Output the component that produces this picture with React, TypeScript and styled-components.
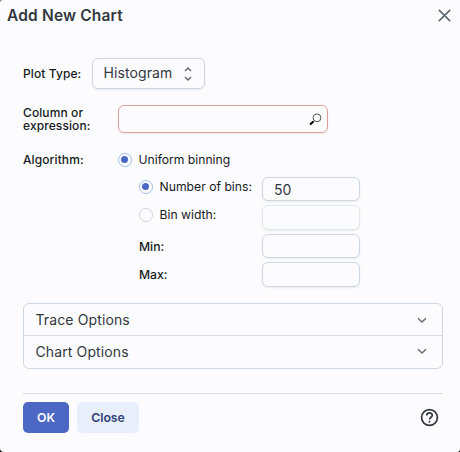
import React from "react";
import styled, { createGlobalStyle } from "styled-components";

const GlobalStyle = createGlobalStyle`
  * { box-sizing: border-box; }
  body { margin: 0; background: linear-gradient(0deg, #111, #777); }
  button, input { font-family: inherit; margin: 0; }
`;

const Dialog = styled.div`
  width: 460px;
  height: 452px;
  background: #fcfcfe;
  border-radius: 3px 0 3px 4px;
  overflow: hidden;
  font-family: Inter, "Liberation Sans", sans-serif;
  font-size: 12.5px;
  color: #171a1c;
`;

const Header = styled.header`
  display: flex;
  justify-content: space-between;
  align-items: center;
  height: 30px;
  padding: 0 9px 0 7px;
`;

const Title = styled.h1`
  margin: 2px 0 0;
  font-size: 15.5px;
  line-height: 20px;
  font-weight: 600;
  letter-spacing: 0.17px;
  color: #32383e;
`;

const IconButton = styled.button`
  display: flex;
  padding: 0;
  border: 0;
  background: none;
`;

const Body = styled.main`
  padding: 28px 17px 0 23px;
`;

const Row = styled.div<{ $h: number; $gap?: number }>`
  display: flex;
  align-items: center;
  height: ${(p) => p.$h}px;
  margin-bottom: ${(p) => p.$gap ?? 0}px;
`;

const Label = styled.label<{ $w: number }>`
  width: ${(p) => p.$w}px;
  flex: none;
  font-size: 12px;
  line-height: 13px;
  font-weight: 500;
  letter-spacing: 0.1px;
`;

const Select = styled.button`
  display: flex;
  align-items: center;
  justify-content: space-between;
  width: 113px;
  height: 31px;
  padding: 0 10px 2px 10.5px;
  border: 1px solid #cdd7e1;
  border-radius: 6px;
  background: #fcfcfe;
  box-shadow: 0 1px 2px rgba(21, 21, 21, 0.08);
  font-size: 14px;
  letter-spacing: 0.1px;
  color: #32383e;

  svg { margin-top: 2px; }
`;

const SearchField = styled.div`
  display: flex;
  align-items: center;
  width: 210px;
  height: 28px;
  padding: 0 5px 0 11px;
  border: 1px solid #dc9f97;
  border-radius: 6px;
  box-shadow: 0 1px 2px rgba(21, 21, 21, 0.08);
`;

const SearchInput = styled.input`
  flex: 1;
  min-width: 0;
  border: 0;
  padding: 0;
  background: none;
  font-size: 14px;
`;

const Binning = styled.div`
  display: grid;
  grid-template-columns: 123px 98px;
  grid-template-rows: 24px 25px 24px 25px;
  row-gap: 4px;
  margin: 7px 0 16px 116px;
`;

const BinLabel = styled.label<{ $bold?: boolean }>`
  display: flex;
  align-items: center;
  gap: 6.5px;
  height: 20px;
  font-size: 12.2px;
  font-weight: ${(p) => (p.$bold ? 500 : 400)};
  padding-top: ${(p) => (p.$bold ? 5 : 0)}px;
`;

const OptionText = styled.span`
  margin-top: -2px;
`;

const Radio = styled.span<{ $checked?: boolean }>`
  display: grid;
  place-items: center;
  flex: none;
  width: 14px;
  height: 14px;
  border: 1px solid ${(p) => (p.$checked ? "#a5bfea" : "#cdd7e1")};
  border-radius: 50%;

  &::after {
    content: "";
    width: 7px;
    height: 7px;
    margin: 0 1px 1px 0;
    border-radius: 50%;
    background: ${(p) => (p.$checked ? "#4a67c5" : "transparent")};
  }
`;

const RadioLabel = styled.label`
  display: flex;
  align-items: center;
  gap: 6.5px;
  font-size: 12.15px;
`;

const Field = styled.input`
  width: 98px;
  height: 100%;
  padding: 0 11px;
  border: 1px solid #cdd7e1;
  border-radius: 6px;
  background: #fcfcfe;
  box-shadow: 0 1px 2px rgba(21, 21, 21, 0.08);
  font-size: 14px;
  color: #32383e;

  &:disabled { border-color: #e2e7ed; }
`;

const Accordion = styled.div`
  height: 66px;
  border: 1px solid #cdd7e1;
  border-radius: 6px;
`;

const AccordionItem = styled.button`
  display: flex;
  align-items: center;
  justify-content: space-between;
  width: 100%;
  height: 31px;
  padding: 0 13px 0 11.5px;
  border: 0;
  background: none;
  font-size: 14px;
  letter-spacing: 0.12px;
  color: #32383e;

  & + & {
    height: 33px;
    padding-bottom: 2px;
    border-top: 1px solid #d7dce3;
  }
`;

const Footer = styled.footer`
  display: flex;
  gap: 8px;
  align-items: flex-start;
  margin-top: 24px;
  padding: 8px 4px 0 0;
  border-top: 1px solid #dadde2;
`;

const Action = styled.button<{ $primary?: boolean }>`
  width: ${(p) => (p.$primary ? 46 : 62)}px;
  height: 31px;
  padding: 0;
  border: 0;
  border-radius: 5px;
  background: ${(p) => (p.$primary ? "#4d67c4" : "#e8effb")};
  color: ${(p) => (p.$primary ? "#fbfcfe" : "#2f4078")};
  font-size: 12.25px;
  font-weight: 600;
`;

const HelpButton = styled(IconButton)`
  margin: 6px 0 0 auto;
`;

const Chevron = () => (
  <svg width="14" height="14" viewBox="0 0 14 14" fill="none" stroke="#636b74" strokeWidth="1.4">
    <path d="M3 5.2 7 9l4-3.8" />
  </svg>
);

export default function App() {
  return (
    <>
      <GlobalStyle />
      <Dialog role="dialog" aria-label="Add New Chart">
        <Header>
          <Title>Add New Chart</Title>
          <IconButton aria-label="Dismiss">
            <svg width="13" height="13" viewBox="0 0 13 13" stroke="#636b74" strokeWidth="1.7">
              <path d="m.8.8 11.4 11.4M12.2.8.8 12.2" />
            </svg>
          </IconButton>
        </Header>
        <Body>
          <Row $h={31} $gap={16}>
            <Label $w={69}>Plot Type:</Label>
            <Select>
              Histogram
              <svg width="12" height="16" viewBox="0 0 12 16" fill="none" stroke="#636b74" strokeWidth="1.5">
                <path d="m3 5 3-3 3 3M3 11l3 3 3-3" />
              </svg>
            </Select>
          </Row>
          <Row $h={28} $gap={16}>
            <Label $w={95}>Column or expression:</Label>
            <SearchField>
              <SearchInput aria-label="Column or expression" />
              <svg width="13" height="13" viewBox="0 0 13 13" fill="none">
                <circle cx="8" cy="4.8" r="3.9" stroke="#555" />
                <path d="m5.2 7.8-1.4 1.3" stroke="#444" />
                <path d="m4.4 8.4-3.3 3.1" stroke="#000" strokeWidth="2" />
              </svg>
            </SearchField>
          </Row>
          <Row $h={21}>
            <Label $w={95}>Algorithm:</Label>
            <RadioLabel><Radio $checked />Uniform binning</RadioLabel>
          </Row>
          <Binning>
            <BinLabel><Radio $checked /><OptionText>Number of bins:</OptionText></BinLabel>
            <Field defaultValue="50" />
            <BinLabel><Radio /><OptionText>Bin width:</OptionText></BinLabel>
            <Field disabled />
            <BinLabel $bold>Min:</BinLabel>
            <Field />
            <BinLabel $bold>Max:</BinLabel>
            <Field />
          </Binning>
          <Accordion>
            <AccordionItem>Trace Options<Chevron /></AccordionItem>
            <AccordionItem>Chart Options<Chevron /></AccordionItem>
          </Accordion>
          <Footer>
            <Action $primary>OK</Action>
            <Action>Close</Action>
            <HelpButton aria-label="Help">
              <svg width="19" height="19" viewBox="0 0 19 19" fill="none" stroke="#32383e" strokeWidth="1.7">
                <circle cx="9.5" cy="9.5" r="7.9" />
                <path d="M6.7 7.6c0-3.6 5.6-3.5 5.6-.3 0 1.9-2.7 2-2.7 4.2" />
                <path d="M9.5 12.7v1.8" />
              </svg>
            </HelpButton>
          </Footer>
        </Body>
      </Dialog>
    </>
  );
}
